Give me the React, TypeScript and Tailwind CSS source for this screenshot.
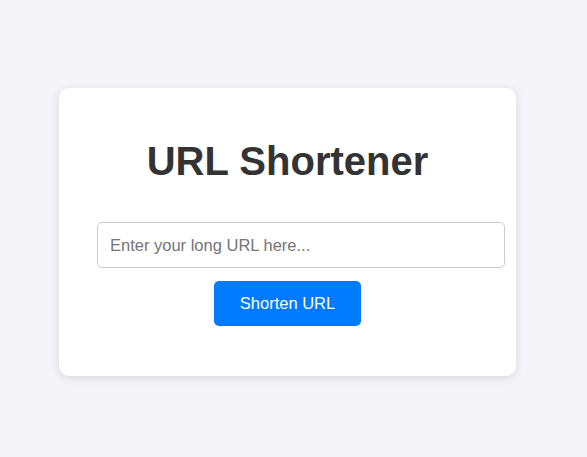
export default function App() {
  return (
    <div className="min-h-[457px] w-full bg-[#f4f4f9] pt-[88px] pl-[59px]" style={{ fontFamily: '"Liberation Sans", Arial, sans-serif' }}>
      <div className="w-[457px] h-[288px] rounded-[10px] bg-white px-[38px] pt-[50px] shadow-[0_2px_10px_rgba(0,0,0,0.12)]">
        <h1 className="text-center text-[40px] leading-[46px] font-bold text-[#333]">URL Shortener</h1>
        <input
          type="text"
          placeholder="Enter your long URL here..."
          className="mt-[38px] block h-[46px] w-[408px] rounded-[5px] border border-[#ccc] bg-white px-[12px] text-[16.5px] text-[#333] placeholder:text-[#757575] outline-none"
        />
        <div className="mt-[13px] flex justify-center">
          <button className="h-[45px] w-[147px] rounded-[5px] bg-[#007bff] text-[16.5px] text-white">Shorten URL</button>
        </div>
      </div>
    </div>
  );
}
